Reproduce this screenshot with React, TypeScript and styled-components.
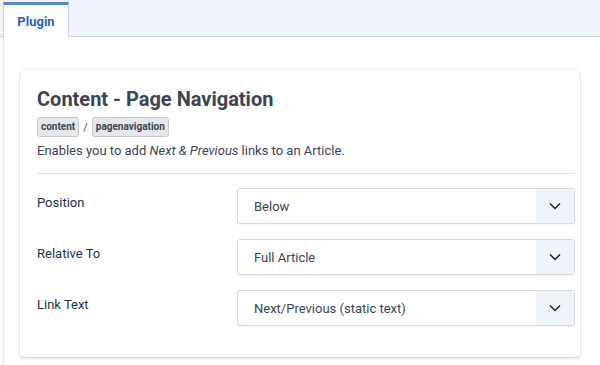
import React from "react";
import styled, { createGlobalStyle } from "styled-components";

const Global = createGlobalStyle`
  html, body { margin: 0; padding: 0; background: #fff; }
  body { font-family: Roboto, "Liberation Sans", sans-serif; }
`;

const Page = styled.div`
  width: 600px;
  height: 365px;
  display: flex;
  flex-direction: column;
  overflow: hidden;
`;

const TabBar = styled.div`
  height: 37px;
  box-sizing: border-box;
  background: #eff3fa;
  border-bottom: 1px solid #c9d1e1;
  padding: 3px 0 0 3px;
  display: flex;
  align-items: flex-end;
`;

const Tab = styled.div`
  width: 66px;
  height: 35px;
  box-sizing: border-box;
  background: #fff;
  border-top: 3px solid #5a88c9;
  border-left: 1px solid #c9d1e1;
  border-right: 1px solid #c9d1e1;
  margin-bottom: -1px;
  display: flex;
  align-items: center;
  justify-content: center;
  font-size: 13px;
  font-weight: 700;
  color: #2a65b5;
`;

const Panel = styled.div`
  flex: 1;
  margin-left: 3px;
  border-left: 1px solid #dfe4ee;
  padding: 33px 16px 0 16px;
`;

const Card = styled.div`
  width: 560px;
  box-sizing: border-box;
  background: #fff;
  border-radius: 4px;
  box-shadow: 0 1px 3px rgba(0, 0, 0, 0.22), 0 0 1px rgba(0, 0, 0, 0.12);
  padding: 16px 5px 31px 17px;
`;

const Title = styled.h2`
  margin: 0;
  font-size: 20px;
  line-height: 26px;
  font-weight: 700;
  color: #3c4452;
`;

const Crumbs = styled.div`
  margin-top: 5px;
  display: flex;
  align-items: center;
  gap: 4px;
  font-size: 11px;
  color: #495057;
`;

const Badge = styled.span`
  display: inline-block;
  background: #e5e8eb;
  border: 1px solid #c5c9ce;
  border-radius: 3px;
  padding: 3px 3px;
  font-size: 10px;
  font-weight: 700;
  color: #3c4452;
  line-height: 12px;
`;

const Desc = styled.p`
  margin: 5px 0 0 0;
  font-size: 13px;
  line-height: 18px;
  color: #3c4452;
`;

const Divider = styled.hr`
  margin: 13px 0 14px 0;
  border: 0;
  border-top: 1px solid #dcdfe3;
`;

const Rows = styled.div`
  display: flex;
  flex-direction: column;
  gap: 15px;
`;

const Row = styled.div`
  display: grid;
  grid-template-columns: 200px 1fr;
  align-items: start;
`;

const Label = styled.label`
  font-size: 13px;
  line-height: 18px;
  color: #22314a;
  padding-top: 6px;
`;

const Select = styled.div`
  height: 36px;
  box-sizing: border-box;
  border: 1px solid #d5d9de;
  border-radius: 3px;
  display: flex;
  align-items: stretch;
  overflow: hidden;
  box-shadow: 0 1px 1px rgba(0, 0, 0, 0.04);
`;

const Value = styled.div`
  flex: 1;
  display: flex;
  align-items: center;
  padding-left: 16px;
  font-size: 13px;
  color: #3c4452;
`;

const Caret = styled.div`
  width: 38px;
  background: #eff3fa;
  display: flex;
  align-items: center;
  justify-content: center;
`;

const Chevron = () => (
  <svg width="12" height="8" viewBox="0 0 12 8" fill="none">
    <path d="M1 1.5 L6 6.5 L11 1.5" stroke="#1d2024" strokeWidth="1.5" />
  </svg>
);

const fields = [
  { label: "Position", value: "Below" },
  { label: "Relative To", value: "Full Article" },
  { label: "Link Text", value: "Next/Previous (static text)" },
];

export default function App() {
  return (
    <Page>
      <Global />
      <TabBar>
        <Tab>Plugin</Tab>
      </TabBar>
      <Panel>
        <Card>
          <Title>Content - Page Navigation</Title>
          <Crumbs>
            <Badge>content</Badge>/<Badge>pagenavigation</Badge>
          </Crumbs>
          <Desc>
            Enables you to add <em>Next &amp; Previous</em> links to an Article.
          </Desc>
          <Divider />
          <Rows>
            {fields.map((f) => (
              <Row key={f.label}>
                <Label>{f.label}</Label>
                <Select>
                  <Value>{f.value}</Value>
                  <Caret>
                    <Chevron />
                  </Caret>
                </Select>
              </Row>
            ))}
          </Rows>
        </Card>
      </Panel>
    </Page>
  );
}
